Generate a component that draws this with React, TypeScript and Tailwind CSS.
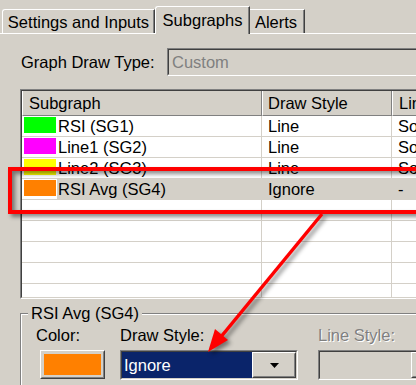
import React from "react";

const rows = [
  { color: "#00ff00", name: "RSI (SG1)", style: "Line", line: "Solid" },
  { color: "#ff00ff", name: "Line1 (SG2)", style: "Line", line: "Solid" },
  { color: "#ffff00", name: "Line2 (SG3)", style: "Line", line: "Solid" },
  { color: "#ff8000", name: "RSI Avg (SG4)", style: "Ignore", line: "-", selected: true },
];

function Sunken({ className = "", innerClass = "", children }: { className?: string; innerClass?: string; children?: React.ReactNode }) {
  return (
    <div className={`border border-t-[#808080] border-l-[#808080] border-b-white border-r-white flex ${className}`}>
      <div className={`flex-1 flex border border-t-[#404040] border-l-[#404040] border-b-[#d4d0c8] border-r-[#d4d0c8] ${innerClass}`}>
        {children}
      </div>
    </div>
  );
}

function Raised({ className = "", innerClass = "", children }: { className?: string; innerClass?: string; children?: React.ReactNode }) {
  return (
    <div className={`border border-t-white border-l-white border-b-[#404040] border-r-[#404040] flex ${className}`}>
      <div className={`flex-1 flex border border-t-[#d4d0c8] border-l-[#d4d0c8] border-b-[#808080] border-r-[#808080] ${innerClass}`}>
        {children}
      </div>
    </div>
  );
}

function DownArrow() {
  return (
    <svg width="9" height="5" viewBox="0 0 9 5">
      <polygon points="0,0 9,0 4.5,5" fill="#000" />
    </svg>
  );
}

export default function App() {
  return (
    <div className="relative w-[416px] h-[385px] overflow-hidden whitespace-nowrap bg-[#d4d0c8] text-black font-['Liberation_Sans',Arial,sans-serif] text-[16.5px] leading-[20px]">
      {/* Tabs */}
      <div className="flex items-end h-[33px] pl-[2px]">
        <div className="w-[153px] h-[24px] flex items-center justify-center border-t border-l border-white border-r border-r-[#404040] shadow-[inset_-1px_0_0_#808080] rounded-tl-[3px]">
          Settings and Inputs
        </div>
        <div className="relative z-10 -mb-px w-[95px] h-[28px] flex items-center justify-center pb-[2px] bg-[#d4d0c8] border-t border-l border-white border-r border-r-[#404040] shadow-[inset_-1px_0_0_#808080] rounded-tl-[3px]">
          Subgraphs
        </div>
        <div className="w-[55px] h-[24px] flex items-center justify-center pr-[2px] border-t border-white border-r border-r-[#404040] shadow-[inset_-1px_0_0_#808080]">
          Alerts
        </div>
      </div>

      {/* Panel */}
      <div className="border-t border-white">
        <div className="mt-[14px] h-[28px] flex items-center pl-[21px]">
          <span className="w-[146px] shrink-0">Graph Draw Type:</span>
          <Sunken className="w-[270px] h-[28px] shrink-0" innerClass="items-center">
            <span className="flex-1 pl-[3px] text-[#808080]">Custom</span>
            <Raised className="w-[20px] h-[23px] mr-[-4px]" />
          </Sunken>
        </div>

        {/* List view */}
        <div className="mt-[13px] ml-[20px] w-[420px] h-[210px] flex border-l border-t border-[#808080] border-b border-b-white">
          <div className="flex-1 flex flex-col overflow-hidden bg-white border-l border-t border-[#404040] border-b border-b-[#d4d0c8]">
            <div className="h-[25px] shrink-0 flex bg-[#d4d0c8]">
              <div className="w-[240px] shrink-0 flex items-center pl-[6px] border-l border-white border-r border-r-[#808080] border-b border-b-[#808080]">Subgraph</div>
              <div className="w-[130px] shrink-0 flex items-center pl-[5px] border-l border-white border-r border-r-[#808080] border-b border-b-[#808080]">Draw Style</div>
              <div className="w-[120px] shrink-0 flex items-center pl-[6px] border-l border-white border-b border-b-[#808080]">Line Style</div>
            </div>
            {rows.map((r) => (
              <div key={r.name} className="h-[21px] shrink-0 flex border-b border-[#d4d0c8]">
                <div className="w-[240px] shrink-0 flex border-r border-[#d4d0c8]">
                  <div className="w-[35px] shrink-0 flex items-start pt-[1px] pl-[2px] bg-white">
                    <div className="w-[32px] h-[16px]" style={{ backgroundColor: r.color }} />
                  </div>
                  <div className={`flex-1 flex items-center pl-[1px] ${r.selected ? "bg-[#d4d0c8]" : ""}`}>{r.name}</div>
                </div>
                <div className={`w-[130px] shrink-0 flex items-center pl-[6px] border-r border-[#d4d0c8] ${r.selected ? "bg-[#d4d0c8]" : ""}`}>{r.style}</div>
                <div className={`w-[120px] shrink-0 flex items-center pl-[6px] ${r.selected ? "bg-[#d4d0c8]" : ""}`}>{r.line}</div>
              </div>
            ))}
            {[0, 1, 2, 3, 4].map((i) => (
              <div key={i} className="h-[21px] shrink-0 flex border-b border-[#d4d0c8]">
                <div className="w-[240px] shrink-0 border-r border-[#d4d0c8]" />
                <div className="w-[130px] shrink-0 border-r border-[#d4d0c8]" />
                <div className="flex-1" />
              </div>
            ))}
          </div>
        </div>

        {/* Group box */}
        <div className="relative mt-[14px] ml-[20px] w-[420px] h-[80px] border-t border-l border-[#808080] shadow-[inset_1px_1px_0_#ffffff]">
          <span className="absolute left-[7px] -top-[11px] px-[3px] bg-[#d4d0c8]">RSI Avg (SG4)</span>
          <div className="flex pt-[11px] pl-[15px]">
            <div className="w-[84px] shrink-0 flex flex-col">
              <span className="h-[20px]">Color:</span>
              <Raised className="mt-[5px] ml-[4px] w-[65px] h-[29px]" innerClass="p-[2px] bg-[#d4d0c8]">
                <div className="flex-1 bg-[#ff8000]" />
              </Raised>
            </div>
            <div className="w-[198px] shrink-0 flex flex-col">
              <span className="h-[20px]">Draw Style:</span>
              <Sunken className="mt-[5px] w-[178px] h-[30px]" innerClass="bg-white">
                <div className="flex-1 flex items-center pl-[2px] bg-[#0a246a] text-white">Ignore</div>
                <Raised className="w-[44px]" innerClass="items-center justify-center bg-[#d4d0c8]">
                  <DownArrow />
                </Raised>
              </Sunken>
            </div>
            <div className="w-[120px] shrink-0 flex flex-col">
              <span className="h-[20px] text-[#808080] [text-shadow:1px_1px_0_#ffffff]">Line Style:</span>
              <Sunken className="mt-[5px] w-[120px] h-[30px]" innerClass="bg-[#d4d0c8] pl-[91px]">
                <Raised className="w-[30px]" />
              </Sunken>
            </div>
          </div>
        </div>
      </div>

      {/* Annotation: red box */}
      <div className="absolute left-[8px] top-[167px] w-[430px] h-[47px] border-4 border-[#ff0000] shadow-[3px_3px_4px_rgba(0,0,0,0.45),inset_3px_3px_4px_rgba(0,0,0,0.45)]" />

      {/* Annotation: arrow */}
      <svg className="absolute left-0 top-0 [filter:drop-shadow(3px_3px_2px_rgba(0,0,0,0.45))]" width="416" height="385" viewBox="0 0 416 385">
        <line x1="322" y1="214" x2="220" y2="338" stroke="#ff0000" strokeWidth="3.5" />
        <polygon points="208,352 228,340 215,329" fill="#ff0000" />
      </svg>
    </div>
  );
}
